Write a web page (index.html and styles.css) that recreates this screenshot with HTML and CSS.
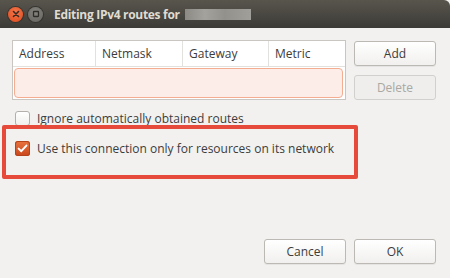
FILE: index.html
```html
<!DOCTYPE html>
<html>
<head>
<meta charset="utf-8">
<link rel="stylesheet" href="styles.css">
</head>
<body>
<div class="window">
  <div class="titlebar">
    <span class="wbtn close"><svg width="14" height="14" viewBox="0 0 14 14"><path d="M4.5 4.5 L9.5 9.5 M9.5 4.5 L4.5 9.5" stroke="#3a2a22" stroke-width="1.6" stroke-linecap="round"/></svg></span>
    <span class="wbtn max"><svg width="14" height="14" viewBox="0 0 14 14"><rect x="4.5" y="4.5" width="5" height="5" rx="0.5" fill="none" stroke="#2e2d2a" stroke-width="1.3"/></svg></span>
    <span class="title">Editing IPv4 routes for</span>
    <span class="blur"></span>
  </div>
  <div class="content">
    <div class="top">
      <div class="table">
        <div class="thead">
          <div class="th c1">Address</div>
          <div class="th c2">Netmask</div>
          <div class="th c3">Gateway</div>
          <div class="th c4">Metric</div>
        </div>
        <div class="tbody">
          <div class="row"></div>
        </div>
      </div>
      <div class="side">
        <button class="btn">Add</button>
        <button class="btn disabled">Delete</button>
      </div>
    </div>
    <label class="check first"><span class="box"></span><span>Ignore automatically obtained routes</span></label>
    <div class="highlight">
      <label class="check"><span class="box on"><svg width="15" height="15" viewBox="0 0 15 15"><path d="M3.6 7.6 L6.3 10.2 L11.4 4.6" fill="none" stroke="#fff" stroke-width="2" stroke-linecap="round" stroke-linejoin="round"/></svg></span><span>Use this connection only for resources on its network</span></label>
    </div>
    <div class="actions">
      <button class="btn">Cancel</button>
      <button class="btn">OK</button>
    </div>
  </div>
</div>
</body>
</html>
```
FILE: styles.css
```css
html, body { margin: 0; padding: 0; }
body { width: 450px; height: 278px; overflow: hidden; background: #f2f1f0; font-family: "Open Sans", "DejaVu Sans", sans-serif; font-size: 12px; color: #3c3c3c; }
.window { width: 450px; height: 278px; display: flex; flex-direction: column; }
.titlebar { height: 28px; display: flex; align-items: center; background: linear-gradient(#58554d, #3c3b37); border-top-right-radius: 6px; flex-shrink: 0; }
.wbtn { width: 15px; height: 15px; border-radius: 50%; display: flex; align-items: center; justify-content: center; }
.close { margin-left: 8px; background: radial-gradient(circle at 50% 35%, #f4764a, #dd4a1d); box-shadow: 0 0 0 1px #3a3430; }
.max { margin-left: 5px; background: radial-gradient(circle at 50% 35%, #85837d, #65635e); box-shadow: 0 0 0 1px #35342f; }
.title { margin-left: 11px; color: #dfdbd2; font-weight: bold; font-size: 12px; letter-spacing: -0.3px; }
.blur { margin-left: 5px; width: 66px; height: 11px; background: linear-gradient(90deg, #8c8a85, #a4a29d 30%, #93918c 60%, #a19f9a); }
.content { flex: 1; display: flex; flex-direction: column; padding: 12px 14px 14px 12px; }
.top { display: flex; gap: 8px; }
.table { width: 334px; height: 58px; border: 1px solid #c9c6c2; background: #fff; display: flex; flex-direction: column; }
.thead { height: 25px; display: flex; border-bottom: 1px solid #e3e1de; }
.th { height: 25px; line-height: 25px; padding-left: 6px; box-sizing: border-box; border-right: 1px solid #e3e1de; }
.c1 { width: 83px; } .c2 { width: 87px; } .c3 { width: 86px; } .c4 { flex: 1; border-right: none; }
.tbody { flex: 1; padding: 1px 2px 1px 1px; display: flex; }
.row { flex: 1; border: 1px solid #f5ad92; border-radius: 4px; background: #fdede8; }
.side { display: flex; flex-direction: column; gap: 9px; padding-top: 1px; }
.btn { width: 82px; height: 25px; border: 1px solid #bcb9b4; border-radius: 3px; background: linear-gradient(#ffffff, #f1f0ee); font-family: inherit; font-size: 12px; color: #3c3c3c; padding: 0; box-shadow: 0 1px 0 rgba(0,0,0,0.05); }
.btn.disabled { color: #a9a8a4; background: #efeeec; border-color: #d2d0cc; box-shadow: none; }
.check { display: flex; align-items: center; gap: 7px; height: 16px; }
.check.first { margin-top: 10px; margin-left: 3px; }
.box { width: 13px; height: 13px; border: 1px solid #b3b0ab; border-radius: 3px; background: linear-gradient(#ffffff, #f0efed); display: flex; align-items: center; justify-content: center; }
.box.on { width: 15px; height: 15px; border: none; background: linear-gradient(#e8743f, #c9461c); box-shadow: inset 0 0 0 1px #b5421b; }
.highlight { margin-left: -10px; margin-top: -1px; width: 339px; height: 46px; border: 4px solid #e64a3b; border-radius: 2px; padding: 0 0 0 9px; }
.highlight .check { margin-top: 11px; }
.actions { margin-top: auto; display: flex; justify-content: flex-end; gap: 8px; }
```
